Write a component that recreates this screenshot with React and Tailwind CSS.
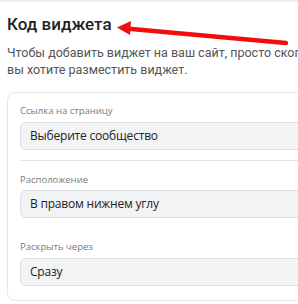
export default function App() {
  const label = "block text-[9.5px] leading-[16px] text-[#7a7a7a]";
  const box =
    "h-[28px] flex items-center pl-[9px] bg-[#f2f3f5] border border-[#dddfe3] rounded-[6px] text-[12px] tracking-[-0.2px] text-[#222]";
  return (
    <div className="relative w-[298px] h-[304px] overflow-hidden bg-white">
      <div className="h-[2px] bg-[#ececec]" />
      <div className="w-[460px] pl-[7px] pt-[10px]" style={{ fontFamily: "Roboto, 'Liberation Sans', sans-serif" }}>
        <h2 className="text-[17px] leading-[24px] font-medium text-[#222]">Код виджета</h2>
        <p className="mt-[8px] text-[12.5px] leading-[17px] text-[#555] whitespace-nowrap">
          Чтобы добавить виджет на ваш сайт, просто скопируйте этот код и вставьте его туда, где
          <br />
          вы хотите разместить виджет.
        </p>
        <div
          className="mt-[14px] border border-[#e6e6e6] rounded-[8px] px-[12px] pt-[10px] pb-[14px]"
          style={{ fontFamily: "'Open Sans', 'Noto Sans', sans-serif" }}
        >
          <span className={label}>Ссылка на страницу</span>
          <div className={`mt-[3px] ${box}`}>Выберите сообщество</div>
          <div className="mt-[10px] h-px bg-[#e4e4e4]" />
          <span className={`mt-[11px] ${label}`}>Расположение</span>
          <div className={`mt-[2px] ${box}`}>В правом нижнем углу</div>
          <span className={`mt-[21px] ${label}`}>Раскрыть через</span>
          <div className={`mt-[3px] ${box}`}>Сразу</div>
        </div>
      </div>
      <svg className="absolute left-0 top-0" width="298" height="60" viewBox="0 0 298 60">
        <line x1="126" y1="28.5" x2="286" y2="43" stroke="#f20d0d" strokeWidth="4.5" strokeLinecap="round" />
        <polygon points="117,27.5 131,21 130,35" fill="#f20d0d" />
      </svg>
    </div>
  );
}
